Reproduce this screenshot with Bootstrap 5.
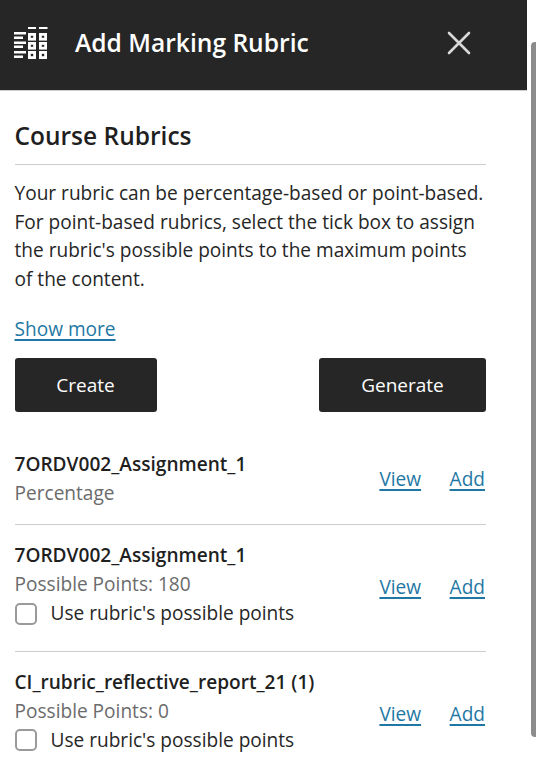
<!DOCTYPE html>
<html lang="en">
<head>
<meta charset="utf-8">
<title>Add Marking Rubric</title>
<link href="https://cdn.jsdelivr.net/npm/bootstrap@5.3.0/dist/css/bootstrap.min.css" rel="stylesheet">
<style>
html,body{height:775px;overflow:hidden;background:#fff}
body{font-family:"Open Sans",sans-serif;font-size:19.08px;color:#262626}
.shell{height:775px}
.pane{width:527px;flex:none}
.rail{width:9px;flex:none;padding-top:42px}
.rail-thumb{margin-left:4px;width:5px;height:695px;background:#8c8c8c;border-radius:4px 0 0 4px}
.topbar{height:91px;background:#262626;color:#fff;border-bottom:1px solid #ccc;padding:0 0 5px 14px}
.top-ico{width:34px;height:34px;flex:none;margin-right:27px}
.top-title{font-size:24.6px;font-weight:600;margin:0;line-height:34px;flex:1}
.top-x{background:none;border:0;padding:0;width:26px;height:26px;margin-right:55px;display:block}
.top-x svg{display:block}
.body-wrap{padding:0 41px 0 14.5px}
.sec-title{font-size:24.5px;font-weight:600;line-height:32px;padding:29px 0 12px;margin:0;border-bottom:1px solid #cdcdcd;color:#1f1f1f}
.intro{margin:14px 0 0;line-height:28.6px}
.more{display:block;margin-top:21.6px;line-height:29px}
a.lnk{color:#1f78a4;text-decoration:underline;text-decoration-thickness:1.5px;text-underline-offset:3px}
.act{background:#262626;color:#fff;border:0;border-radius:3px;height:54px;font-size:19px;font-weight:500;font-family:inherit}
.act:hover{background:#262626;color:#fff}
.act-a{width:142px}.act-b{width:167px}
.acts{margin-top:14px}
.list-wrap{margin-top:22.2px}
.rrow{border-bottom:1px solid #cdcdcd;padding:16px 0 15.6px}
.rrow.has-check{padding:16.4px 0 22.4px}
.rrow.has-check:last-child{padding-top:16px}
.rrow:last-child{border-bottom:0}
.r-name{font-weight:600;line-height:29px;color:#1f1f1f}
.r-sub{color:#6b6b6b;line-height:29px}
.r-links{gap:28.5px;margin-right:1px}
.has-check .r-links{margin-top:6px}
.r-check{width:22px;height:22px;margin:0 14px 0 0;border:2px solid #9a9a9a;border-radius:3px;flex:none;float:none}
.r-lab{line-height:29px}
</style>
</head>
<body>
<div class="shell d-flex">
  <div class="pane">
    <header class="topbar d-flex align-items-center">
      <svg class="top-ico" viewBox="0 0 34 34" fill="none" stroke="#fff">
        <path d="M14 2h8M25 2h8.5" stroke-width="2.2"/>
        <path d="M0 7.3h12M0 11.7h9M0 16.7h12M0 20.7h9M0 26.3h12M0 30.7h9" stroke-width="2.4"/>
        <rect x="15.4" y="8.4" width="5.2" height="4.8" stroke-width="2.8"/>
        <rect x="26.4" y="8.4" width="5.2" height="4.8" stroke-width="2.8"/>
        <rect x="15.4" y="17.4" width="5.2" height="4.8" stroke-width="2.8"/>
        <rect x="26.4" y="17.4" width="5.2" height="4.8" stroke-width="2.8"/>
        <rect x="15.4" y="26.4" width="5.2" height="5.2" stroke-width="2.8"/>
        <rect x="26.4" y="26.4" width="5.2" height="5.2" stroke-width="2.8"/>
      </svg>
      <h1 class="top-title">Add Marking Rubric</h1>
      <button class="top-x" type="button" aria-label="Close">
        <svg viewBox="0 0 26 26" width="26" height="26" stroke="#d9d9d9" stroke-width="2.6" stroke-linecap="round"><path d="M3 3l20 20M23 3L3 23"/></svg>
      </button>
    </header>
    <main class="body-wrap">
      <h2 class="sec-title">Course Rubrics</h2>
      <p class="intro">Your rubric can be percentage-based or point-based. For point-based rubrics, select the tick box to assign the rubric's possible points to the maximum points of the content.</p>
      <a href="#" class="lnk more">Show more</a>
      <div class="acts d-flex justify-content-between">
        <button class="btn act act-a" type="button">Create</button>
        <button class="btn act act-b" type="button">Generate</button>
      </div>
      <div class="list-wrap">
        <div class="rrow d-flex align-items-center justify-content-between">
          <div><div class="r-name">7ORDV002_Assignment_1</div><div class="r-sub">Percentage</div></div>
          <div class="d-flex r-links"><a href="#" class="lnk">View</a><a href="#" class="lnk">Add</a></div>
        </div>
        <div class="rrow has-check d-flex align-items-center justify-content-between">
          <div><div class="r-name">7ORDV002_Assignment_1</div><div class="r-sub">Possible Points: 180</div>
            <div class="d-flex align-items-center"><input class="form-check-input r-check" type="checkbox" id="c1"><label class="r-lab" for="c1">Use rubric's possible points</label></div></div>
          <div class="d-flex r-links"><a href="#" class="lnk">View</a><a href="#" class="lnk">Add</a></div>
        </div>
        <div class="rrow has-check d-flex align-items-center justify-content-between">
          <div><div class="r-name">CI_rubric_reflective_report_21 (1)</div><div class="r-sub">Possible Points: 0</div>
            <div class="d-flex align-items-center"><input class="form-check-input r-check" type="checkbox" id="c2"><label class="r-lab" for="c2">Use rubric's possible points</label></div></div>
          <div class="d-flex r-links"><a href="#" class="lnk">View</a><a href="#" class="lnk">Add</a></div>
        </div>
      </div>
    </main>
  </div>
  <div class="rail"><div class="rail-thumb"></div></div>
</div>
<script src="https://cdn.jsdelivr.net/npm/bootstrap@5.3.0/dist/js/bootstrap.bundle.min.js"></script>
</body>
</html>
